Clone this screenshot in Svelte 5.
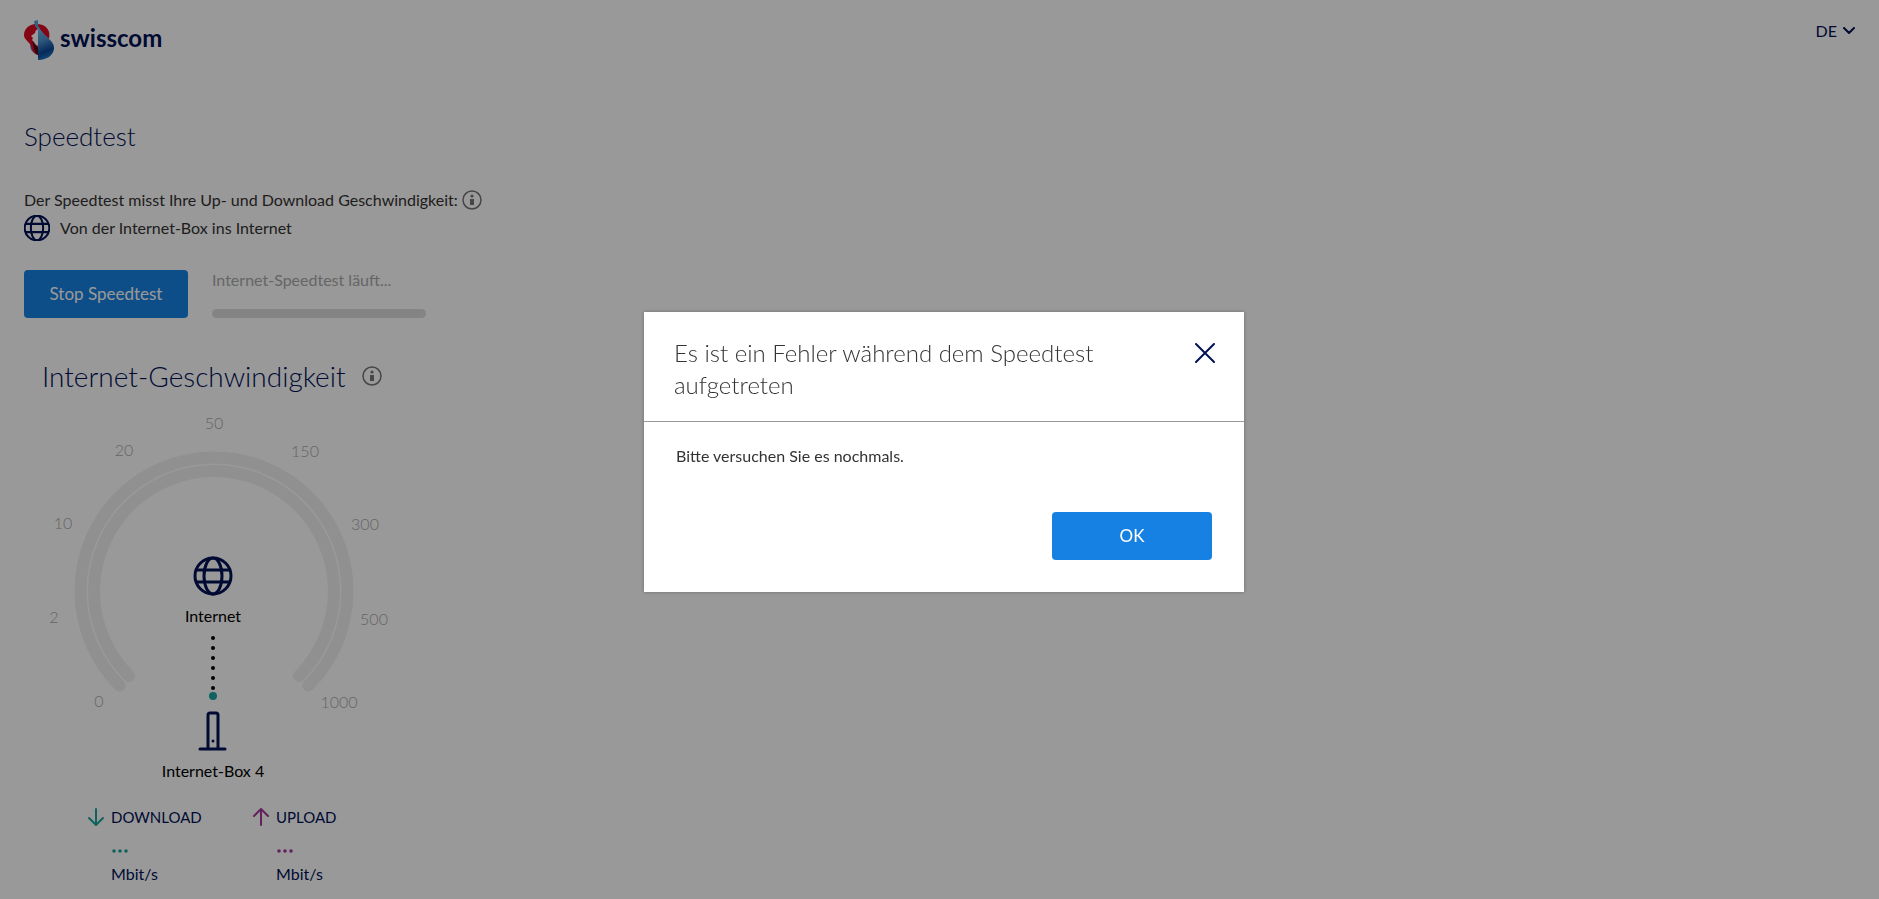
<script lang="ts">
	const languages = ['DE', 'FR', 'IT', 'EN'];

	// gauge labels, placed around the dial
	const ticks = [
		{ v: '0', x: 75, y: 303 },
		{ v: '2', x: 30, y: 219 },
		{ v: '10', x: 39, y: 125 },
		{ v: '20', x: 100, y: 52 },
		{ v: '50', x: 190, y: 25 },
		{ v: '150', x: 281, y: 53 },
		{ v: '300', x: 341, y: 126 },
		{ v: '500', x: 350, y: 221 },
		{ v: '1000', x: 315, y: 304 }
	];
	const dots = [240, 250, 260, 270, 280, 290];

	const results = [
		{ id: 'down', label: 'DOWNLOAD', arrow: 'M8 1v16M1 10l7 7 7-7' },
		{ id: 'up', label: 'UPLOAD', arrow: 'M8 17V1M1 8l7-7 7 7' }
	];

	let lang = $state('DE');
	let running = $state(true);
	let showError = $state(true);

	function closeError() {
		showError = false;
	}
</script>

<svelte:window onkeydown={(e) => e.key === 'Escape' && closeError()} />

{#snippet globe()}
	<circle cx="20" cy="20" r="18" />
	<ellipse cx="20" cy="20" rx="9" ry="18" />
	<path d="M4 14h32M4 26h32" />
{/snippet}

{#snippet info()}
	<svg class="info" viewBox="0 0 20 20" aria-hidden="true">
		<circle cx="10" cy="10" r="9" />
		<path class="fill" d="M8 9h4v6H8z" />
		<circle class="fill" cx="10" cy="6" r="1.6" />
	</svg>
{/snippet}

<div class="page">
	<header>
		<a class="brand" href="/">
			<svg viewBox="0 0 30 40" aria-hidden="true">
				<defs>
					<linearGradient id="sail" x1="0.3" y1="0" x2="0.5" y2="1">
						<stop offset="0" stop-color="#7ab8e6" />
						<stop offset="0.4" stop-color="#4a94cf" />
						<stop offset="0.75" stop-color="#0b4696" />
						<stop offset="1" stop-color="#1f7cc4" />
					</linearGradient>
				</defs>
				<path fill="#3f8fd0" d="M7 22c-2 6 0 10 7 13v-8z" />
				<path fill="#dd0b24" d="M12 4C5 4 0 9 0 15c0 5 5 6 7 11 1 5 3 8 7 9V10l11 9c2-9-3-15-13-15z" />
				<path fill="#4a0a24" d="M8 21l6 7v7c-4-2-4-8-6-14z" />
				<path fill="#fff" d="M14 9c-2 1-3 2-3 4l-4 3 2 2-1 2 2 2c1 2 2 3 4 4z" />
				<path fill="#5b9fd2" d="M10 1l4-1v10l-3-4z" />
				<path fill="url(#sail)" d="M14 6c3 5 7 9 11 13 3 3 5 5 5 9 0 7-7 12-16 12z" />
			</svg>
			<span>swisscom</span>
		</a>
		<label class="lang">
			<select bind:value={lang} aria-label="Sprache">
				{#each languages as l}<option value={l}>{l}</option>{/each}
			</select>
			<svg viewBox="0 0 12 8" aria-hidden="true"><path d="M1 1l5 5 5-5" /></svg>
		</label>
	</header>

	<main>
		<h1>Speedtest</h1>

		<p class="intro">
			Der Speedtest misst Ihre Up- und Download Geschwindigkeit:
			{@render info()}
		</p>
		<p class="route">
			<svg viewBox="1 1 38 38" aria-hidden="true">{@render globe()}</svg>
			Von der Internet-Box ins Internet
		</p>

		<div class="run">
			<button class="primary" onclick={() => (running = !running)}>
				{running ? 'Stop' : 'Start'} Speedtest
			</button>
			<div class="status">
				<span id="status">{running ? 'Internet-Speedtest läuft...' : ''}</span>
				<div class="bar" role="progressbar" aria-labelledby="status"></div>
			</div>
		</div>

		<section>
			<h2>Internet-Geschwindigkeit {@render info()}</h2>

			<svg class="gauge" viewBox="0 0 380 390" role="img" aria-label="Internet-Geschwindigkeit">
				<g class="track">
					<path d="M95.6 287.4A133.5 133.5 0 1 1 284.4 287.4" />
					<path d="M105.1 277.9A120 120 0 1 1 274.9 277.9" />
				</g>
				{#each ticks as t (t.v)}
					<text class="tick" x={t.x} y={t.y + 6}>{t.v}</text>
				{/each}
				<g class="icon" transform="translate(169 158)">{@render globe()}</g>
				<text x="189" y="224">Internet</text>
				{#each dots as y}<circle cx="189" cy={y} r="2" />{/each}
				<circle class="packet" cx="189" cy="298" r="4" />
				<path class="icon" d="M184 351V317q0-2 2-2h6q2 0 2 2v34M176 351h25" />
				<circle class="led" cx="189" cy="343" r="1.5" />
				<text x="189" y="379">Internet-Box 4</text>
			</svg>

			<div class="results">
				{#each results as r (r.id)}
					<div class="result {r.id}">
						<svg viewBox="0 0 16 18" aria-hidden="true"><path d={r.arrow} /></svg>
						<span class="name">{r.label}</span>
						<svg class="wait" viewBox="0 0 18 4" aria-label="..." role="img">
							<circle cx="3" cy="2" r="1.8" /><circle cx="9" cy="2" r="1.8" /><circle cx="15" cy="2" r="1.8" />
						</svg>
						<span class="unit">Mbit/s</span>
					</div>
				{/each}
			</div>
		</section>
	</main>
</div>

{#if showError}
	<div class="overlay">
		<div class="modal" role="dialog" aria-modal="true" aria-labelledby="error-title">
			<div class="modal-head">
				<h3 id="error-title">Es ist ein Fehler während dem Speedtest aufgetreten</h3>
				<button class="close" aria-label="Schliessen" onclick={closeError}>
					<svg viewBox="0 0 20 20" aria-hidden="true"><path d="M1 1l18 18M19 1L1 19" /></svg>
				</button>
			</div>
			<div class="modal-body">
				<p>Bitte versuchen Sie es nochmals.</p>
				<button class="primary" onclick={closeError}>OK</button>
			</div>
		</div>
	</div>
{/if}

<style>
	:global(body) {
		background: #fff;
		overflow: hidden;
	}
	.page,
	.overlay {
		--navy: #001155;
		--blue: #1781e3;
		--teal: #1ba59b;
		--purple: #a6389b;
		font-family: Lato, 'Open Sans', sans-serif;
		font-size: 16px;
		line-height: 24px;
		color: #333;
	}
	h1,
	h2,
	h3,
	p {
		margin: 0;
	}
	svg {
		display: block;
		flex: none;
		fill: none;
		stroke-linecap: round;
		stroke-linejoin: round;
	}
	.page {
		padding: 0 24px;
	}
	header {
		display: flex;
		justify-content: space-between;
		align-items: flex-start;
		padding-top: 20px;
	}
	.brand {
		display: flex;
		gap: 6px;
		color: var(--navy);
		font-size: 24px;
		font-weight: 700;
		line-height: 36px;
		text-decoration: none;
	}
	.brand svg {
		width: 30px;
		height: 40px;
	}
	.lang {
		display: flex;
		align-items: center;
		gap: 6px;
		color: var(--navy);
	}
	.lang select {
		appearance: none;
		border: 0;
		padding: 0;
		background: transparent;
		color: inherit;
		font: inherit;
		line-height: 22px;
		field-sizing: content;
		cursor: pointer;
	}
	.lang svg {
		width: 12px;
		height: 8px;
		stroke: currentColor;
		stroke-width: 2;
	}
	h1 {
		margin-top: 60px;
		color: var(--navy);
		font-size: 26px;
		font-weight: 300;
		line-height: 32px;
	}
	.intro,
	.route {
		display: flex;
		align-items: center;
		gap: 8px;
	}
	.intro {
		gap: 4px;
		margin-top: 36px;
	}
	.route {
		gap: 10px;
		margin-top: 2px;
		line-height: 28px;
	}
	.route svg {
		width: 26px;
		height: 26px;
		stroke: var(--navy);
		stroke-width: 3;
	}
	.info {
		width: 20px;
		height: 20px;
		stroke: #757575;
		stroke-width: 1.5;
	}
	.info .fill {
		fill: #757575;
		stroke: none;
	}
	.primary {
		min-width: 164px;
		height: 48px;
		padding: 0 16px;
		border: 0;
		border-radius: 4px;
		background: var(--blue);
		color: #fff;
		font: inherit;
		font-size: 17px;
		cursor: pointer;
	}
	.run {
		display: flex;
		gap: 24px;
		margin-top: 28px;
	}
	.status {
		display: flex;
		flex-direction: column;
		justify-content: space-between;
		width: 214px;
		color: #aaa;
		line-height: 20px;
	}
	.bar {
		height: 9px;
		border-radius: 5px;
		background: #ddd;
	}
	section {
		width: 380px;
		max-width: 100%;
		margin-top: 38px;
	}
	h2 {
		display: flex;
		align-items: center;
		gap: 16px;
		padding-left: 18px;
		color: var(--navy);
		font-size: 28px;
		font-weight: 300;
		line-height: 40px;
	}
	.gauge {
		width: 100%;
		margin-top: 2px;
	}
	.gauge text {
		fill: #000;
		text-anchor: middle;
	}
	.gauge .tick {
		fill: #aaa;
		font-weight: 300;
	}
	.gauge > circle {
		fill: #000;
	}
	.gauge .packet {
		fill: var(--teal);
	}
	.gauge .led {
		fill: var(--navy);
	}
	.track {
		stroke: #f0f0f0;
		stroke-width: 12;
	}
	.icon {
		stroke: var(--navy);
		stroke-width: 3;
	}
	.results {
		display: flex;
		gap: 4px;
		padding: 17px 0 0 64px;
		color: var(--navy);
	}
	.result {
		display: grid;
		flex: none;
		grid-template-columns: 16px 1fr;
		column-gap: 7px;
		align-items: center;
		width: 161px;
	}
	.result svg {
		width: 16px;
		height: 18px;
		stroke: currentColor;
		stroke-width: 2;
	}
	.result .wait {
		grid-column: 2;
		width: 18px;
		height: 4px;
		margin: 20px 0 9px;
		fill: currentColor;
		stroke: none;
	}
	.result span {
		color: var(--navy);
	}
	.result .name {
		font-size: 15px;
	}
	.result .unit {
		grid-column: 2;
	}
	.down {
		color: var(--teal);
	}
	.up {
		color: var(--purple);
	}

	/* modal */
	.overlay {
		position: fixed;
		inset: 0;
		display: flex;
		align-items: center;
		justify-content: center;
		padding: 5px 0 0 9px;
		background: rgba(0, 0, 0, 0.4);
	}
	.modal {
		width: 600px;
		max-width: 100%;
		background: #fff;
		box-shadow: 0 0 4px rgba(0, 0, 0, 0.3);
	}
	.modal-head {
		display: flex;
		align-items: flex-start;
		justify-content: space-between;
		gap: 40px;
		padding: 25px 29px 20px 30px;
		border-bottom: 1px solid #999;
	}
	h3 {
		max-width: 440px;
		font-size: 24px;
		font-weight: 300;
		line-height: 32px;
	}
	.close {
		padding: 6px 0;
		border: 0;
		background: transparent;
		cursor: pointer;
	}
	.close svg {
		width: 20px;
		height: 20px;
		stroke: var(--navy);
		stroke-width: 2;
	}
	.modal-body {
		display: flex;
		flex-direction: column;
		padding: 22px 32px 32px;
	}
	.modal-body .primary {
		align-self: flex-end;
		min-width: 160px;
		margin-top: 44px;
	}
</style>
